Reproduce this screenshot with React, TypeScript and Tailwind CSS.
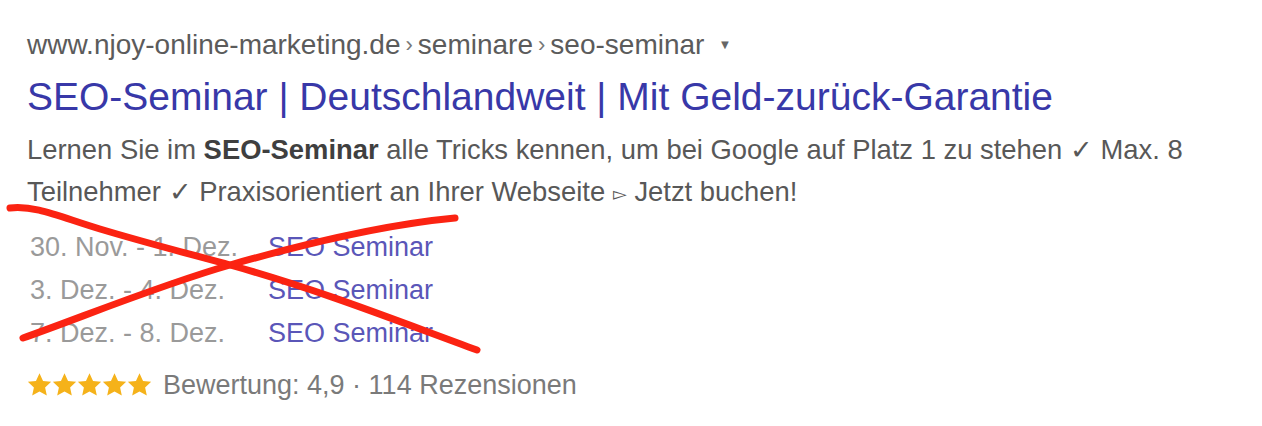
import React from "react";

const dates = [
  "30. Nov. - 1. Dez.",
  "3. Dez. - 4. Dez.",
  "7. Dez. - 8. Dez.",
];

function Star() {
  return (
    <svg width="25" height="24" viewBox="1.5 1.5 21 21" className="shrink-0">
      <path
        d="M12 1.8l3.1 6.6 7.1.8-5.3 4.9 1.5 7.1L12 17.6l-6.4 3.6 1.5-7.1L1.8 9.2l7.1-.8z"
        fill="#f5b21a"
      />
    </svg>
  );
}

export default function App() {
  return (
    <div
      className="relative w-[1262px] h-[426px] bg-white overflow-hidden"
      style={{ fontFamily: '"Liberation Sans", Arial, sans-serif' }}
    >
      <div className="flex flex-col pl-[27px] pt-[25px]">
        <div className="flex items-center text-[28px] leading-[40px] text-[#5b5b5b]">
          <span>www.njoy-online-marketing.de</span>
          <span className="text-[22px] mx-[5px] text-[#777]">›</span>
          <span>seminare</span>
          <span className="text-[22px] mx-[5px] text-[#777]">›</span>
          <span>seo-seminar</span>
          <span className="ml-[14px] text-[13px] text-[#666]">▼</span>
        </div>
        <div className="text-[39px] leading-[64px] text-[#3838a8] whitespace-nowrap">
          SEO-Seminar | Deutschlandweit | Mit Geld-zurück-Garantie
        </div>
        <div className="w-[1220px] text-[27.4px] leading-[42px] text-[#585858]">
          Lernen Sie im <b className="text-[#3f3f3f]">SEO-Seminar</b> alle Tricks kennen, um bei Google auf Platz 1 zu stehen ✓ Max. 8
          <br />
          Teilnehmer ✓ Praxisorientiert an Ihrer Webseite <span className="text-[18px] align-middle">▻</span> Jetzt buchen!
        </div>
        <div className="flex flex-col mt-[11px] pl-[3px]">
          {dates.map((d) => (
            <div key={d} className="flex text-[27px] leading-[43px]">
              <span className="w-[238px] text-[#9a9a9a]">{d}</span>
              <span className="text-[#5a56b8]">SEO Seminar</span>
            </div>
          ))}
        </div>
        <div className="flex items-center mt-[9px] h-[43px] text-[27px] text-[#7a7a7a]">
          <div className="flex items-center mr-[11px]">
            <Star />
            <Star />
            <Star />
            <Star />
            <Star />
          </div>
          <span>Bewertung: 4,9 · 114 Rezensionen</span>
        </div>
      </div>
      <svg
        className="absolute left-0 top-0 pointer-events-none"
        width="1262"
        height="426"
        viewBox="0 0 1262 426"
      >
        <path
          d="M10 208 C 35 205, 60 217, 100 229 C 150 244, 190 254, 230 265 C 320 290, 400 322, 477 350"
          stroke="#fb2312"
          strokeWidth="7"
          fill="none"
          strokeLinecap="round"
        />
        <path
          d="M23 338 C 80 318, 160 285, 230 265 C 300 245, 380 225, 455 218"
          stroke="#fb2312"
          strokeWidth="7"
          fill="none"
          strokeLinecap="round"
        />
      </svg>
    </div>
  );
}
